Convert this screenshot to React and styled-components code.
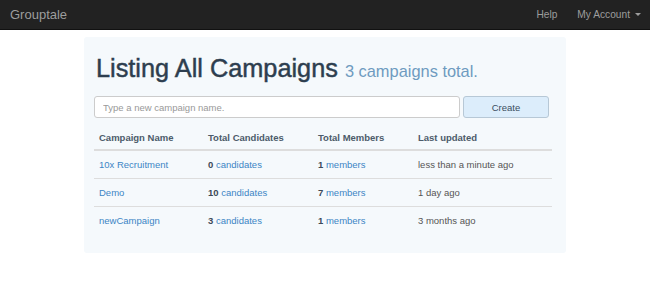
import React from 'react'
import styled, { createGlobalStyle } from 'styled-components'

const campaigns = [
  { name: '10x Recruitment', candidates: 0, members: 1, updated: 'less than a minute ago' },
  { name: 'Demo', candidates: 10, members: 7, updated: '1 day ago' },
  { name: 'newCampaign', candidates: 3, members: 1, updated: '3 months ago' },
]

const GlobalStyle = createGlobalStyle`
  body {
    margin: 0;
    background: #fff;
    font-family: "Liberation Sans", Arial, sans-serif;
  }
`

function App() {
  return (
    <>
      <GlobalStyle />
      <Navbar>
        <Brand>Grouptale</Brand>
        <NavLinks>
          <NavLink>Help</NavLink>
          <NavLink>
            My Account <Caret />
          </NavLink>
        </NavLinks>
      </Navbar>
      <Panel>
        <Heading>
          Listing All Campaigns <small>3 campaigns total.</small>
        </Heading>
        <CreateForm>
          <NameInput placeholder='Type a new campaign name.' />
          <CreateButton>Create</CreateButton>
        </CreateForm>
        <Table>
          <thead>
            <tr>
              <Th $w={99}>Campaign Name</Th>
              <Th $w={100}>Total Candidates</Th>
              <Th $w={90}>Total Members</Th>
              <Th>Last updated</Th>
            </tr>
          </thead>
          <tbody>
            {campaigns.map((c) => (
              <tr key={c.name}>
                <Td><Link>{c.name}</Link></Td>
                <Td><b>{c.candidates}</b> <Link>candidates</Link></Td>
                <Td><b>{c.members}</b> <Link>members</Link></Td>
                <Td>{c.updated}</Td>
              </tr>
            ))}
          </tbody>
        </Table>
      </Panel>
    </>
  )
}

const Navbar = styled.nav`
  height: 30px;
  background: #222;
  border-bottom: 1px solid #111;
  box-sizing: border-box;
  display: flex;
  align-items: center;
  justify-content: space-between;
  padding: 0 9px 0 10px;
  color: #9d9d9d;
`

const Brand = styled.div`
  font-size: 13px;
`

const NavLinks = styled.div`
  display: flex;
  gap: 20px;
  align-items: center;
  font-size: 10.2px;
`

const NavLink = styled.span`
  display: flex;
  align-items: center;
  gap: 5px;
`

const Caret = styled.span`
  width: 0;
  height: 0;
  border-left: 3px solid transparent;
  border-right: 3px solid transparent;
  border-top: 3px solid #9d9d9d;
`

const Panel = styled.div`
  width: 482px;
  box-sizing: border-box;
  margin: 7px 0 0 84px;
  padding: 18px 14px 19px 10px;
  background: #f5f9fc;
  border-radius: 3px;
`

const Heading = styled.h1`
  margin: 0 0 11px 2px;
  font-size: 25.3px;
  line-height: 27px;
  font-weight: 400;
  color: #2d3e4f;
  -webkit-text-stroke: 0.45px #2d3e4f;
  small {
    font-size: 16.4px;
    color: #6e9bc0;
    -webkit-text-stroke: 0;
  }
`

const CreateForm = styled.div`
  display: flex;
  gap: 3px;
  height: 22px;
`

const NameInput = styled.input`
  width: 366px;
  box-sizing: border-box;
  border: 1px solid #ccc;
  border-radius: 3px;
  padding: 0 8px;
  font-family: inherit;
  font-size: 9.5px;
  color: #555;
  background: #fff;
  &::placeholder {
    color: #999;
  }
`

const CreateButton = styled.button`
  width: 86px;
  box-sizing: border-box;
  border: 1px solid #b7c8d6;
  border-radius: 3px;
  background: #dcedfb;
  font-family: inherit;
  font-size: 9.5px;
  color: #3a4d5e;
  padding: 0;
`

const Table = styled.table`
  width: 458px;
  margin-top: 7px;
  border-collapse: collapse;
  font-size: 9.5px;
  color: #555;
`

const Th = styled.th`
  width: ${(p) => (p.$w ? `${p.$w}px` : 'auto')};
  text-align: left;
  font-weight: 700;
  color: #4c5b6a;
  padding: 0 5px;
  height: 24px;
  border-bottom: 2px solid #ddd;
`

const Td = styled.td`
  padding: 0 5px;
  height: 27px;
  border-top: 1px solid #ddd;
  tr:first-child > & {
    border-top: none;
  }
  b {
    color: #3d4a58;
  }
`

const Link = styled.a`
  color: #3c85c5;
  cursor: pointer;
`

export default App
